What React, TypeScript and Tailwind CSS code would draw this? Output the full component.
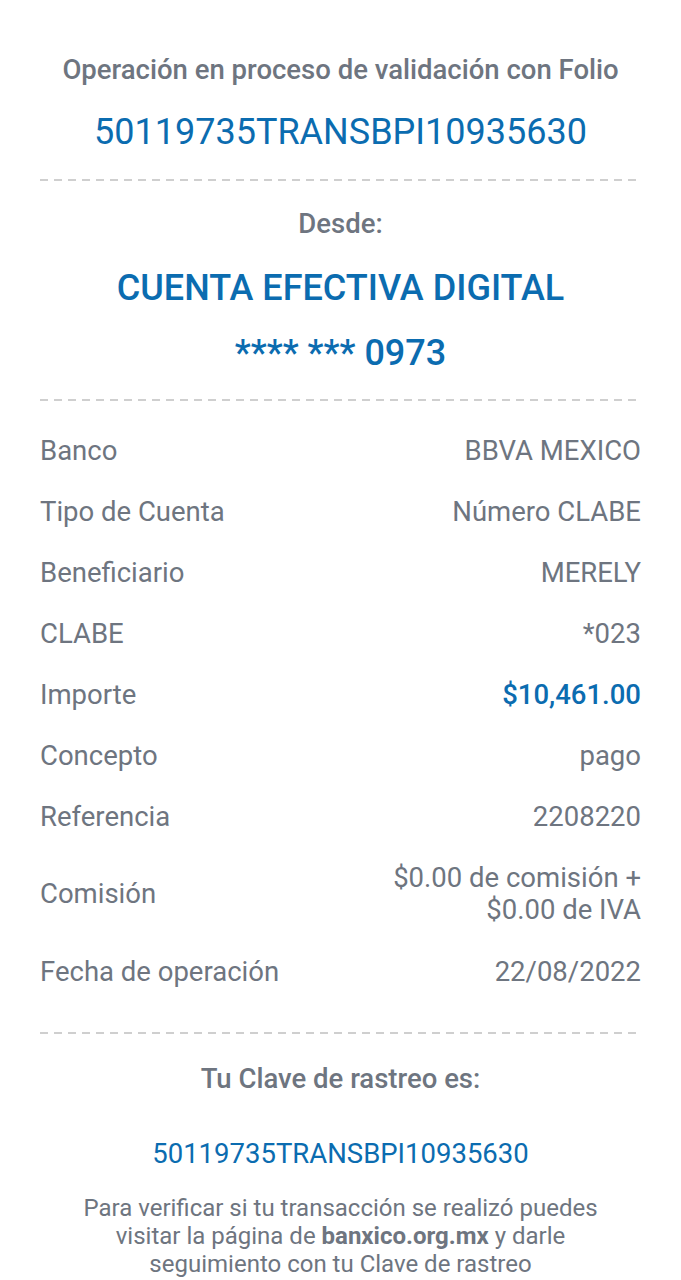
import React from "react";

const Dash = () => (
  <div className="h-[2px] w-full bg-[repeating-linear-gradient(to_right,#cfcfcf_0px,#cfcfcf_8px,transparent_8px,transparent_14px)]" />
);

const rows: [string, React.ReactNode, boolean?][] = [
  ["Banco", "BBVA MEXICO"],
  ["Tipo de Cuenta", "Número CLABE"],
  ["Beneficiario", "MERELY"],
  ["CLABE", "*023"],
  ["Importe", "$10,461.00", true],
  ["Concepto", "pago"],
  ["Referencia", "2208220"],
];

export default function App() {
  return (
    <div className="w-[681px] h-[1280px] bg-white overflow-hidden font-['Roboto',sans-serif] text-[#6e7580]">
      <div className="px-[40px] flex flex-col">
        <div className="pt-[54px] text-center text-[27.5px] leading-[32px] font-medium whitespace-nowrap">
          Operación en proceso de validación con Folio
        </div>
        <div className="mt-[26px] text-center text-[36px] leading-[40px] text-[#0b6cb0]">
          50119735TRANSBPI10935630
        </div>
        <div className="mt-[27px]">
          <Dash />
        </div>
        <div className="mt-[27px] text-center text-[27.5px] leading-[32px] font-medium">Desde:</div>
        <div className="mt-[28px] text-center text-[36px] leading-[40px] font-medium text-[#0b6cb0]">
          CUENTA EFECTIVA DIGITAL
        </div>
        <div className="mt-[25px] text-center text-[36px] leading-[40px] font-medium text-[#0b6cb0]">
          **** *** 0973
        </div>
        <div className="mt-[26px]">
          <Dash />
        </div>
        <div className="mt-[19px] flex flex-col text-[27.5px]">
          {rows.map(([k, v, blue]) => (
            <div key={k} className="h-[61px] flex items-center justify-between">
              <span>{k}</span>
              <span className={blue ? "font-medium text-[#0b6cb0]" : ""}>{v}</span>
            </div>
          ))}
          <div className="h-[93px] flex items-center justify-between">
            <span>Comisión</span>
            <span className="text-right leading-[32px]">
              $0.00 de comisión +
              <br />
              $0.00 de IVA
            </span>
          </div>
          <div className="h-[64px] flex items-center justify-between">
            <span>Fecha de operación</span>
            <span>22/08/2022</span>
          </div>
        </div>
        <div className="mt-[28px]">
          <Dash />
        </div>
        <div className="mt-[29px] text-center text-[27.5px] leading-[32px] font-medium">Tu Clave de rastreo es:</div>
        <div className="mt-[43px] text-center text-[27.5px] leading-[32px] text-[#0b6cb0]">
          50119735TRANSBPI10935630
        </div>
        <div className="mt-[24px] text-center text-[24px] leading-[28px] whitespace-nowrap">
          Para verificar si tu transacción se realizó puedes
          <br />
          visitar la página de <span className="font-bold">banxico.org.mx</span> y darle
          <br />
          seguimiento con tu Clave de rastreo
        </div>
      </div>
    </div>
  );
}
